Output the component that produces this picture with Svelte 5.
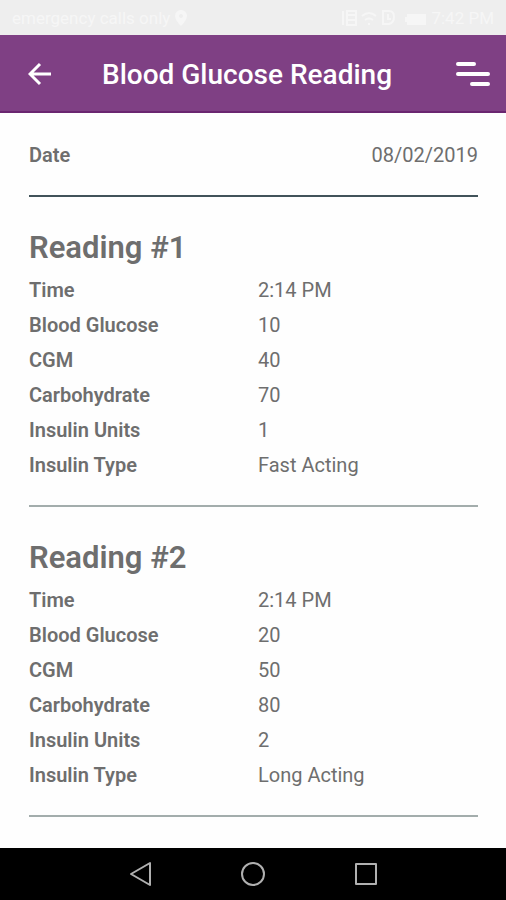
<script lang="ts">
  type Reading = {
    id: number;
    rows: [string, string][];
  };

  const date = '08/02/2019';

  const readings: Reading[] = [
    {
      id: 1,
      rows: [
        ['Time', '2:14 PM'],
        ['Blood Glucose', '10'],
        ['CGM', '40'],
        ['Carbohydrate', '70'],
        ['Insulin Units', '1'],
        ['Insulin Type', 'Fast Acting'],
      ],
    },
    {
      id: 2,
      rows: [
        ['Time', '2:14 PM'],
        ['Blood Glucose', '20'],
        ['CGM', '50'],
        ['Carbohydrate', '80'],
        ['Insulin Units', '2'],
        ['Insulin Type', 'Long Acting'],
      ],
    },
  ];
</script>

<svelte:head>
  <title>Blood Glucose Reading</title>
</svelte:head>

<div class="screen">
  <div class="status">
    <span>emergency calls only</span>
    <svg class="pin" width="14" height="16" viewBox="0 0 14 16">
      <path fill-rule="evenodd" d="M7 0a6 6 0 0 0-6 6c0 4 6 10 6 10s6-6 6-10a6 6 0 0 0-6-6zm0 4a2 2 0 1 1 0 4 2 2 0 0 1 0-4z" />
    </svg>
    <svg class="signals" width="90" height="18" viewBox="0 0 90 18">
      <g fill="none" stroke="currentColor" stroke-width="2">
        <path d="M6 2v14M10 2h9v14h-9zM10 6h9M10 11h9" />
        <path d="M25 7q7-6 14 0M28 11q4-3 8 0M31 15h2" />
        <path d="M46 2h6q5 0 5 6t-5 7h-6zM51 5v5h3" />
      </g>
      <path d="M70 5h19v11H70zM68 8h2v5h-2z" />
    </svg>
    <span>7:42 PM</span>
  </div>

  <header>
    <button class="back" aria-label="Back">
      <svg width="24" height="24" viewBox="0 0 24 24">
        <path d="M23 12H2M12 2 2 12l10 10" />
      </svg>
    </button>
    <h1>Blood Glucose Reading</h1>
    <button class="menu" aria-label="Menu">
      <svg width="34" height="26" viewBox="0 0 34 26">
        <path d="M2 3h16M2 13h30M16 23h16" />
      </svg>
    </button>
  </header>

  <main>
    <div class="date">
      <span class="label">Date</span>
      <span>{date}</span>
    </div>

    {#each readings as reading (reading.id)}
      <section>
        <h2>Reading #{reading.id}</h2>
        <table>
          <tbody>
            {#each reading.rows as [label, value]}
              <tr>
                <th scope="row">{label}</th>
                <td>{value}</td>
              </tr>
            {/each}
          </tbody>
        </table>
      </section>
    {/each}
  </main>

  <nav>
    <button aria-label="System back">
      <svg width="26" height="26" viewBox="0 0 26 26">
        <path d="M23 2v22L4 13z" />
      </svg>
    </button>
    <button aria-label="Home">
      <svg width="26" height="26" viewBox="0 0 26 26">
        <circle cx="13" cy="13" r="11" />
      </svg>
    </button>
    <button aria-label="Recent apps">
      <svg width="26" height="26" viewBox="0 0 26 26">
        <path d="M3 3h20v20H3z" />
      </svg>
    </button>
  </nav>
</div>

<style>
  :global(body) {
    margin: 0;
    background: #fefefe;
  }
  .screen {
    display: flex;
    flex-direction: column;
    min-height: 100vh;
    font-family: Roboto, 'Liberation Sans', sans-serif;
    color: #6e6e6e;
  }
  .status {
    display: flex;
    align-items: center;
    height: 35px;
    box-sizing: border-box;
    padding: 0 12px;
    background: #eeeeee;
    color: #f6f6f6;
    font-size: 17px;
    white-space: nowrap;
  }
  .status svg {
    fill: currentColor;
  }
  .pin {
    margin-left: 4px;
  }
  .signals {
    margin: 0 4px 0 auto;
  }
  header {
    display: flex;
    align-items: center;
    height: 78px;
    box-sizing: border-box;
    padding: 2px 16px 0 28px;
    background: #7f4084;
    border-bottom: 2px solid #6a2670;
    color: #fff;
  }
  button {
    display: flex;
    padding: 0;
    border: 0;
    background: none;
    color: inherit;
    cursor: pointer;
  }
  header svg {
    fill: none;
    stroke: currentColor;
    stroke-width: 3;
  }
  .menu svg {
    stroke-width: 4;
    stroke-linecap: round;
  }
  h1 {
    flex: 1;
    margin: 0;
    padding: 2px 14px 0 0;
    font-size: 28px;
    font-weight: 500;
    line-height: 36px;
    text-align: center;
    white-space: nowrap;
  }
  main {
    flex: 1;
    padding: 0 28px 28px 29px;
    font-size: 20px;
  }
  .date {
    display: flex;
    justify-content: space-between;
    padding: 25px 0 22px;
    border-bottom: 2px solid #41535a;
    line-height: 35px;
  }
  .label,
  th {
    font-weight: 600;
  }
  section {
    padding: 31px 0 22px;
    border-bottom: 2px solid #a3adac;
  }
  h2 {
    margin: 0 0 5px;
    font-size: 31px;
    font-weight: 600;
    line-height: 40px;
  }
  table {
    width: 100%;
    border-collapse: collapse;
    table-layout: fixed;
    line-height: 35px;
  }
  th,
  td {
    padding: 0;
    text-align: left;
  }
  th {
    width: 51%;
  }
  nav {
    display: flex;
    justify-content: center;
    align-items: center;
    gap: 87px;
    height: 52px;
    background: #000;
    color: #b0b0b0;
  }
  nav svg {
    fill: none;
    stroke: currentColor;
    stroke-width: 2;
    stroke-linejoin: round;
  }
</style>
